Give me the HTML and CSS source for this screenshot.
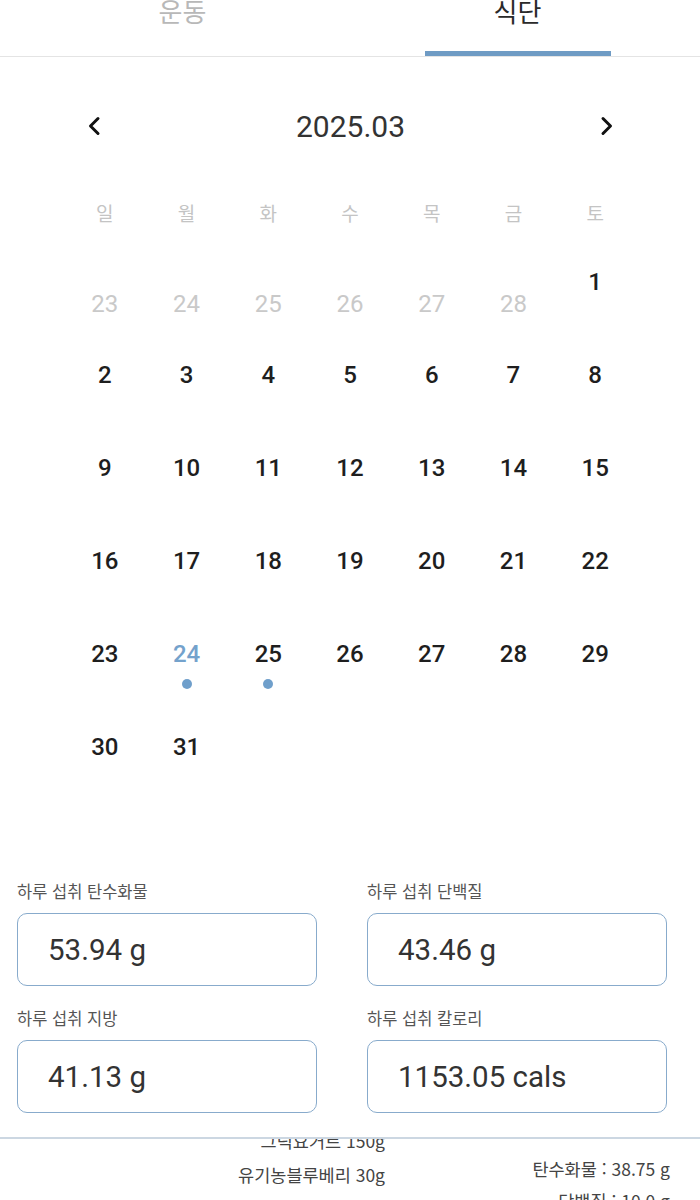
FILE: index.html
```html
<!DOCTYPE html>
<html lang="ko">
<head>
<meta charset="utf-8">
<title>식단</title>
<link rel="stylesheet" href="styles.css">
</head>
<body>
<div class="app">
  <nav class="tabs">
    <div class="tab"><span class="tab-label">운동</span></div>
    <div class="tab active"><span class="tab-label">식단</span><span class="indicator"></span></div>
  </nav>

  <section class="calendar">
    <div class="cal-head">
      <svg class="arrow" width="14" height="20" viewBox="0 0 14 20"><path d="M11 2.5 L3.5 10 L11 17.5" fill="none" stroke="#111" stroke-width="3" stroke-linecap="round" stroke-linejoin="round"/></svg>
      <span class="month">2025.03</span>
      <svg class="arrow" width="14" height="20" viewBox="0 0 14 20"><path d="M3 2.5 L10.5 10 L3 17.5" fill="none" stroke="#111" stroke-width="3" stroke-linecap="round" stroke-linejoin="round"/></svg>
    </div>
    <div class="weekdays">
      <span>일</span><span>월</span><span>화</span><span>수</span><span>목</span><span>금</span><span>토</span>
    </div>
    <div class="days">
      <div class="day other"><span class="num">23</span></div>
      <div class="day other"><span class="num">24</span></div>
      <div class="day other"><span class="num">25</span></div>
      <div class="day other"><span class="num">26</span></div>
      <div class="day other"><span class="num">27</span></div>
      <div class="day other"><span class="num">28</span></div>
      <div class="day"><span class="num">1</span></div>

      <div class="day"><span class="num">2</span></div>
      <div class="day"><span class="num">3</span></div>
      <div class="day"><span class="num">4</span></div>
      <div class="day"><span class="num">5</span></div>
      <div class="day"><span class="num">6</span></div>
      <div class="day"><span class="num">7</span></div>
      <div class="day"><span class="num">8</span></div>

      <div class="day"><span class="num">9</span></div>
      <div class="day"><span class="num">10</span></div>
      <div class="day"><span class="num">11</span></div>
      <div class="day"><span class="num">12</span></div>
      <div class="day"><span class="num">13</span></div>
      <div class="day"><span class="num">14</span></div>
      <div class="day"><span class="num">15</span></div>

      <div class="day"><span class="num">16</span></div>
      <div class="day"><span class="num">17</span></div>
      <div class="day"><span class="num">18</span></div>
      <div class="day"><span class="num">19</span></div>
      <div class="day"><span class="num">20</span></div>
      <div class="day"><span class="num">21</span></div>
      <div class="day"><span class="num">22</span></div>

      <div class="day"><span class="num">23</span></div>
      <div class="day selected"><span class="num">24</span><span class="dot"></span></div>
      <div class="day"><span class="num">25</span><span class="dot"></span></div>
      <div class="day"><span class="num">26</span></div>
      <div class="day"><span class="num">27</span></div>
      <div class="day"><span class="num">28</span></div>
      <div class="day"><span class="num">29</span></div>

      <div class="day"><span class="num">30</span></div>
      <div class="day"><span class="num">31</span></div>
    </div>
  </section>

  <section class="summary">
    <div class="field">
      <label class="field-label">하루 섭취 탄수화물</label>
      <div class="field-box">53.94 g</div>
    </div>
    <div class="field">
      <label class="field-label">하루 섭취 단백질</label>
      <div class="field-box">43.46 g</div>
    </div>
    <div class="field">
      <label class="field-label">하루 섭취 지방</label>
      <div class="field-box">41.13 g</div>
    </div>
    <div class="field">
      <label class="field-label">하루 섭취 칼로리</label>
      <div class="field-box">1153.05 cals</div>
    </div>
  </section>

  <section class="sheet">
    <div class="sheet-inner">
      <ul class="foods">
        <li>그릭요거트 150g</li>
        <li>유기농블루베리 30g</li>
        <li>아몬드 20g</li>
      </ul>
      <ul class="nutrients">
        <li>탄수화물 : 38.75 g</li>
        <li>단백질 : 10.0 g</li>
        <li>지방 : 15.2 g</li>
      </ul>
    </div>
  </section>
</div>
</body>
</html>
```
FILE: styles.css
```css
* { box-sizing: border-box; }

html, body {
  margin: 0;
  padding: 0;
  background: #ffffff;
}

body {
  font-family: Roboto, "Noto Sans CJK KR", sans-serif;
  color: #222;
  width: 700px;
  height: 1200px;
  overflow: hidden;
}

.app {
  width: 700px;
}

/* Tabs */
.tabs {
  display: flex;
  height: 57px;
  padding: 0 15px;
  border-bottom: 1px solid #e4e4e4;
  overflow: hidden;
}

.tab {
  flex: 1;
  display: flex;
  flex-direction: column;
  align-items: center;
  justify-content: space-between;
}

.tab-label {
  font-family: "Noto Sans CJK KR", sans-serif;
  font-size: 26px;
  line-height: 26px;
  margin-top: -2px;
  color: #b8b8b8;
}

.tab.active .tab-label {
  color: #2a2a2a;
}

.indicator {
  display: block;
  width: 186px;
  height: 5px;
  background: #6f9bc4;
}

/* Calendar */
.calendar {
  padding: 0 64px;
}

.cal-head {
  display: flex;
  align-items: center;
  justify-content: space-between;
  height: 40px;
  margin-top: 49px;
  padding: 0 22px 0 23px;
}

.arrow {
  display: block;
}

.month {
  font-size: 30px;
  color: #333;
}

.weekdays {
  display: grid;
  grid-template-columns: repeat(7, 1fr);
  height: 30px;
  margin-top: 51px;
  align-items: center;
  text-align: center;
  font-family: "Noto Sans CJK KR", sans-serif;
  font-size: 19px;
  color: #c4c4c4;
}

.days {
  display: grid;
  grid-template-columns: repeat(7, 1fr);
  grid-auto-rows: 93px;
  margin-top: 40px;
}

.day {
  display: flex;
  flex-direction: column;
  align-items: center;
}

.num {
  display: block;
  height: 30px;
  line-height: 30px;
  font-size: 24px;
  font-weight: 500;
  color: #1e1e1e;
}

.day.other .num {
  margin-top: 22px;
  font-weight: 400;
  color: #c9c9c9;
}

.day.selected .num {
  color: #74a2cc;
}

.dot {
  display: block;
  width: 10px;
  height: 10px;
  border-radius: 50%;
  background: #6f9fcb;
  margin-top: 10px;
}

/* Summary fields */
.summary {
  display: grid;
  grid-template-columns: 300px 300px;
  column-gap: 50px;
  row-gap: 22px;
  padding: 0 17px;
  margin-top: 56px;
}

.field {
  display: flex;
  flex-direction: column;
  gap: 12px;
}

.field-label {
  display: block;
  height: 20px;
  line-height: 20px;
  font-family: "Noto Sans CJK KR", sans-serif;
  font-size: 16.5px;
  color: #555;
}

.field-box {
  height: 73px;
  border: 1.5px solid #88abcc;
  border-radius: 10px;
  padding-left: 30px;
  display: flex;
  align-items: center;
  font-size: 29.5px;
  color: #333;
}

/* Bottom sheet */
.sheet {
  margin-top: 24px;
  height: 70px;
  border-top: 2px solid #ccd7e2;
  overflow: hidden;
}

.sheet-inner {
  display: flex;
  margin-top: -15px;
}

.foods, .nutrients {
  list-style: none;
  margin: 0;
  padding: 0;
  font-family: "Noto Sans CJK KR", sans-serif;
  font-size: 17.5px;
  color: #444;
  text-align: right;
}

.foods {
  width: 385px;
}

.foods li {
  height: 34px;
  line-height: 34px;
}

.nutrients {
  width: 285px;
  padding-top: 29px;
}

.nutrients li {
  height: 32px;
  line-height: 32px;
}
```
